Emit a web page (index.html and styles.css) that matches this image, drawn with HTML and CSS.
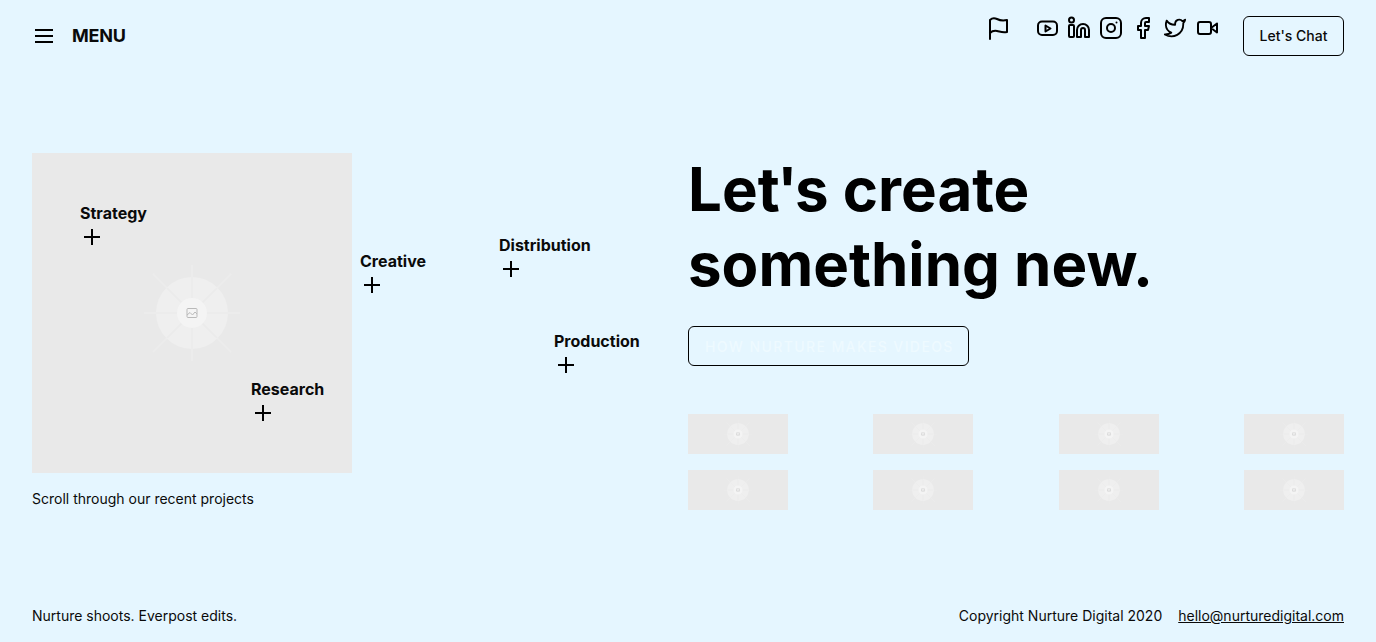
FILE: index.html
```html
<!DOCTYPE html>
<html lang="en">
<head>
<meta charset="UTF-8">
<meta name="viewport" content="width=device-width, initial-scale=1.0">
<title>Nurture Digital</title>
<link rel="stylesheet" href="styles.css">
</head>
<body>

<svg class="defs" width="0" height="0" aria-hidden="true">
<symbol id="placeholder" viewBox="0 0 100 100">
<g stroke="#ececec" stroke-width="2">
<path d="M50 2V98M2 50H98"/>
<path d="M50 50 89 11M50 50 11 11M50 50 11 89M50 50 89 89"/>
</g>
<circle cx="50" cy="50" r="36" fill="#efefef"/>
<g stroke="#ebebeb" stroke-width="1.500">
<path d="M50 14V86M14 50H86"/>
<path d="M50 50 75 25M50 50 25 25M50 50 25 75M50 50 75 75"/>
</g>
<circle cx="50" cy="50" r="15" fill="#f4f4f4"/>
<g fill="none" stroke="#b9b9b9" stroke-width="1">
<rect x="45" y="45.500" width="10" height="9" rx="1"/>
<path d="M45 52 48 49.500 50.500 52 53 49 55 51"/>
</g>
</symbol>
</svg>

<header class="top">
<div class="menu">
<svg class="burger" width="24" height="24" viewBox="0 0 24 24"><path d="M3 6H21M3 12H21M3 18H21"/></svg>
<span>MENU</span>
</div>
<div class="top-right">
<svg class="icon flag" width="24" height="24" viewBox="0 0 24 24"><path d="M3 23V4C5 2 8 2 10 3S15 5 20 4V16C15 17 13 15.500 10 15S5 15 3 17"/></svg>
<nav class="socials">
<svg class="icon" width="24" height="24" viewBox="0 0 24 24"><rect x="3" y="5.500" width="19" height="13.500" rx="4"/><path d="M10.500 9.500v6l5-3z"/></svg>
<svg class="icon" width="24" height="24" viewBox="0 0 24 24"><rect x="2" y="9" width="5" height="12" rx="1"/><circle cx="4.500" cy="4" r="2.500"/><path d="M10 21V14a6 6 0 0 1 12 0v7h-4v-7a2 2 0 0 0-4 0v7z"/></svg>
<svg class="icon" width="24" height="24" viewBox="0 0 24 24"><rect x="2" y="2" width="20" height="20" rx="5"/><circle cx="12" cy="12" r="4"/><path d="M17.500 6.500h.01"/></svg>
<svg class="icon" width="24" height="24" viewBox="0 0 24 24"><path d="M18 2h-3a5 5 0 0 0-5 5v3H7v4h3v8h4v-8h3l1-4h-4V7a1 1 0 0 1 1-1h3z"/></svg>
<svg class="icon" width="24" height="24" viewBox="-1 -1 26 26"><path d="M23 3a10.900 10.900 0 0 1-3 1.480 4.480 4.480 0 0 0-7.860 3v1A10.660 10.660 0 0 1 3 4s-4 9 5 13a11.640 11.640 0 0 1-7 2c9 5 20 0 20-11.500a4.500 4.500 0 0 0-.08-.83A7.720 7.720 0 0 0 23 3z"/></svg>
<svg class="icon" width="24" height="24" viewBox="0 0 24 24"><rect x="3" y="6" width="13" height="12" rx="2"/><path d="M22 7.500l-6 4.500 6 4.500z"/></svg>
</nav>
<a class="chat" href="#">Let's Chat</a>
</div>
</header>

<main class="content">
<section class="map-col">
<div class="map">
<div class="square">
<svg class="placeholder-big" width="100" height="100"><use href="#placeholder"/></svg>
</div>
<div class="spot spot-strategy"><b>Strategy</b><svg class="plus" width="24" height="24" viewBox="0 0 24 24"><path d="M12 4V20M4 12H20"/></svg></div>
<div class="spot spot-research"><b>Research</b><svg class="plus" width="24" height="24" viewBox="0 0 24 24"><path d="M12 4V20M4 12H20"/></svg></div>
<div class="spot spot-creative"><b>Creative</b><svg class="plus" width="24" height="24" viewBox="0 0 24 24"><path d="M12 4V20M4 12H20"/></svg></div>
<div class="spot spot-distribution"><b>Distribution</b><svg class="plus" width="24" height="24" viewBox="0 0 24 24"><path d="M12 4V20M4 12H20"/></svg></div>
<div class="spot spot-production"><b>Production</b><svg class="plus" width="24" height="24" viewBox="0 0 24 24"><path d="M12 4V20M4 12H20"/></svg></div>
</div>
<p class="scroll-note">Scroll through our recent projects</p>
</section>

<section class="intro">
<h1>Let<span class="apos">'</span>s create<br>something new.</h1>
<a class="how" href="#">HOW NURTURE MAKES VIDEOS</a>
<div class="thumbs">
<div class="thumb"><svg width="30" height="30"><use href="#placeholder"/></svg></div>
<div class="thumb"><svg width="30" height="30"><use href="#placeholder"/></svg></div>
<div class="thumb"><svg width="30" height="30"><use href="#placeholder"/></svg></div>
<div class="thumb"><svg width="30" height="30"><use href="#placeholder"/></svg></div>
<div class="thumb"><svg width="30" height="30"><use href="#placeholder"/></svg></div>
<div class="thumb"><svg width="30" height="30"><use href="#placeholder"/></svg></div>
<div class="thumb"><svg width="30" height="30"><use href="#placeholder"/></svg></div>
<div class="thumb"><svg width="30" height="30"><use href="#placeholder"/></svg></div>
</div>
</section>
</main>

<footer class="bottom">
<span>Nurture shoots. Everpost edits.</span>
<span class="bottom-right">
<span>Copyright Nurture Digital 2020</span>
<a href="#">hello@nurturedigital.com</a>
</span>
</footer>

</body>
</html>
```
FILE: styles.css
```css
* {
box-sizing: border-box;
}
body {
font-family: Inter, "Liberation Sans", sans-serif;
background-color: #e5f6ff;
color: #0a0a0a;
margin: 0;
padding: 0 32px;
height: 642px;
overflow: hidden;
display: flex;
flex-direction: column;
font-size: 14px;
line-height: 20px;
}
a {
color: inherit;
}
.defs {
position: absolute;
}
.top {
display: flex;
justify-content: space-between;
align-items: flex-start;
padding-top: 16px;
height: 153px;
}
.menu {
display: flex;
align-items: center;
gap: 16px;
height: 40px;
font-size: 18px;
font-weight: 700;
letter-spacing: -.2px;
}
.burger {
fill: none;
stroke: #000;
stroke-width: 2;
}
.top-right {
display: flex;
align-items: flex-start;
}
.icon {
fill: none;
stroke: #000;
stroke-width: 2;
stroke-linecap: round;
stroke-linejoin: round;
display: block;
}
.flag {
margin-right: 24px;
}
.socials {
display: flex;
gap: 8px;
margin-right: 24px;
}
.chat {
display: block;
width: 101px;
border: 1px solid #000;
border-radius: 6px;
height: 40px;
padding: 9px 0;
text-align: center;
text-decoration: none;
font-weight: 500;
}
.content {
display: grid;
grid-template-columns: 624px 656px;
gap: 32px;
flex: 1;
}
.map {
position: relative;
height: 320px;
}
.square {
width: 320px;
height: 320px;
background: #e9e9e9;
display: flex;
align-items: center;
justify-content: center;
}
.spot {
position: absolute;
font-size: 16px;
line-height: 24px;
}
.spot b {
display: block;
font-weight: 700;
}
.plus {
display: block;
fill: none;
stroke: #000;
stroke-width: 2;
}
.spot-strategy {
left: 48px;
top: 48px;
}
.spot-research {
left: 219px;
top: 224px;
}
.spot-creative {
left: 328px;
top: 96px;
}
.spot-distribution {
left: 467px;
top: 80px;
}
.spot-production {
left: 522px;
top: 176px;
}
.scroll-note {
margin: 16px 0 0;
}
h1 {
margin: -1px 0 0;
font-size: 60px;
line-height: 75px;
font-weight: 700;
color: #000;
}
.apos {
margin: 0 -2.500px;
}
.how {
display: block;
width: 281px;
height: 40px;
margin-top: 24px;
padding: 10px 16px 0;
border: 1px solid #000;
border-radius: 6px;
color: #eefaff;
font-weight: 500;
letter-spacing: 1.400px;
text-decoration: none;
white-space: nowrap;
}
.thumbs {
display: grid;
grid-template-columns: repeat(4, 100px);
justify-content: space-between;
row-gap: 16px;
margin-top: 48px;
}
.thumb {
height: 40px;
background: #e9e9e9;
display: flex;
align-items: center;
justify-content: center;
}
.bottom {
display: flex;
justify-content: space-between;
padding-bottom: 16px;
}
.bottom-right {
display: flex;
gap: 16px;
}
```
